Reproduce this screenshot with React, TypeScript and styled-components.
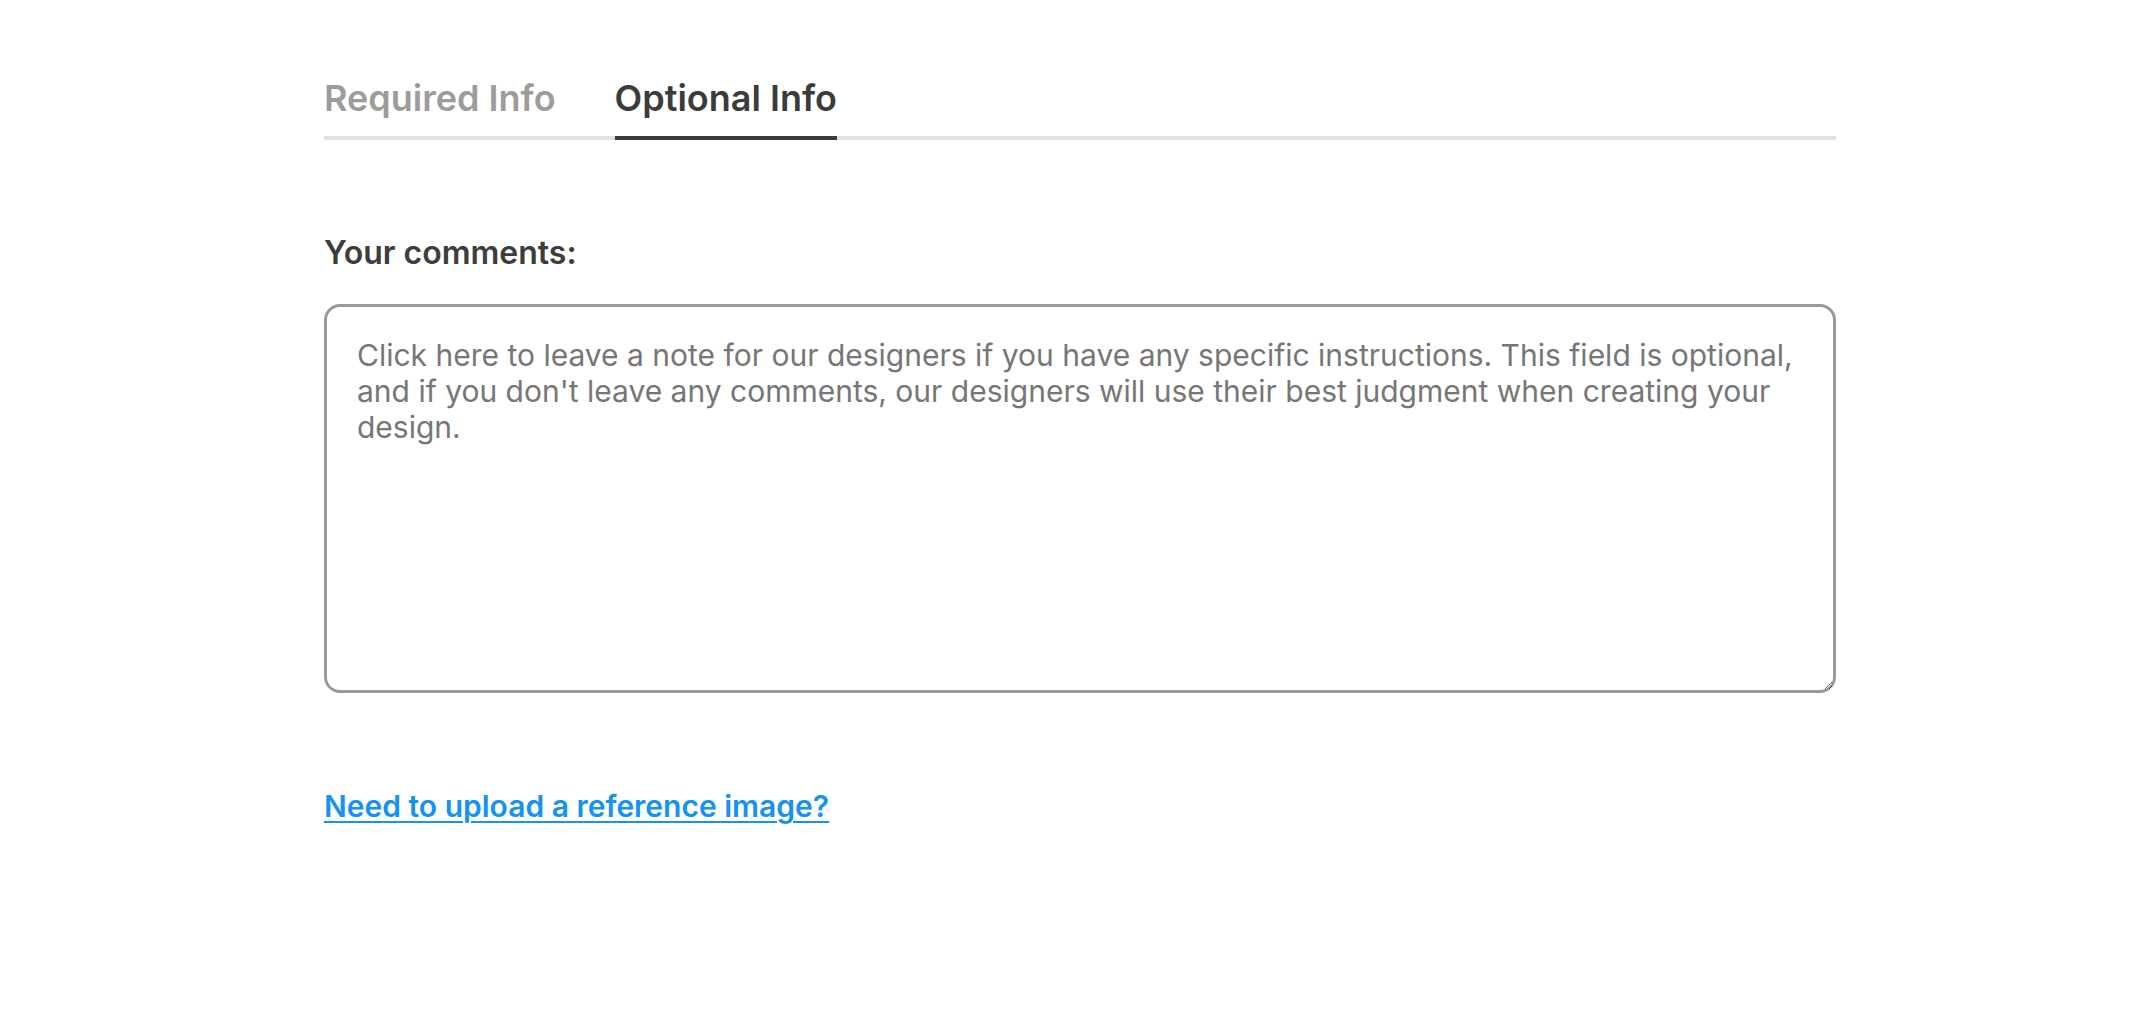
import React, { useState } from "react";
import styled, { createGlobalStyle } from "styled-components";

const GlobalStyle = createGlobalStyle`
  html, body {
    margin: 0;
    padding: 0;
    background: #ffffff;
  }
  body {
    font-family: Inter, "Noto Sans", "Liberation Sans", sans-serif;
  }
`;

const Page = styled.main`
  box-sizing: border-box;
  width: 1512px;
  margin-left: 324px;
  padding-top: 76px;
`;

const TabBar = styled.div`
  display: flex;
  gap: 59px;
  border-bottom: 4px solid #e2e2e2;
`;

const Tab = styled.button<{ $active: boolean }>`
  appearance: none;
  background: none;
  border: none;
  margin: 0 0 -4px 0;
  padding: 0 0 16px 0;
  border-bottom: 4px solid ${(p) => (p.$active ? "#3b3b3b" : "transparent")};
  font-family: Inter, "Noto Sans", sans-serif;
  font-size: 36px;
  line-height: 44px;
  font-weight: 600;
  color: ${(p) => (p.$active ? "#3b3b3b" : "#9c9c9c")};
  cursor: pointer;
`;

const Field = styled.section`
  display: flex;
  flex-direction: column;
  gap: 31px;
  margin-top: 93px;
`;

const Label = styled.label`
  font-family: Inter, "Noto Sans", sans-serif;
  font-size: 32px;
  line-height: 40px;
  font-weight: 600;
  color: #3d3d3d;
`;

const Comments = styled.textarea`
  box-sizing: border-box;
  width: 100%;
  height: 389px;
  margin: 0;
  padding: 30px 30px;
  border: 3px solid #9a9a9a;
  border-radius: 16px;
  font-family: Inter, "Noto Sans", sans-serif;
  font-size: 30px;
  line-height: 36px;
  color: #3d3d3d;
  outline: none;
  &::placeholder {
    color: #767676;
    opacity: 1;
  }
`;

const UploadLink = styled.a`
  display: inline-block;
  margin-top: 95px;
  font-family: Inter, "Noto Sans", sans-serif;
  font-size: 30px;
  line-height: 36px;
  font-weight: 600;
  color: #1592f2;
  text-decoration: underline;
  text-decoration-thickness: 2px;
  text-underline-offset: 4px;
  cursor: pointer;
`;

export default function App() {
  const [tab, setTab] = useState<"required" | "optional">("optional");
  return (
    <>
      <GlobalStyle />
      <Page>
        <TabBar>
          <Tab $active={tab === "required"} onClick={() => setTab("required")}>
            Required Info
          </Tab>
          <Tab $active={tab === "optional"} onClick={() => setTab("optional")}>
            Optional Info
          </Tab>
        </TabBar>
        <Field>
          <Label htmlFor="comments">Your comments:</Label>
          <Comments
            id="comments"
            placeholder="Click here to leave a note for our designers if you have any specific instructions. This field is optional, and if you don't leave any comments, our designers will use their best judgment when creating your design."
          />
        </Field>
        <UploadLink>Need to upload a reference image?</UploadLink>
      </Page>
    </>
  );
}
